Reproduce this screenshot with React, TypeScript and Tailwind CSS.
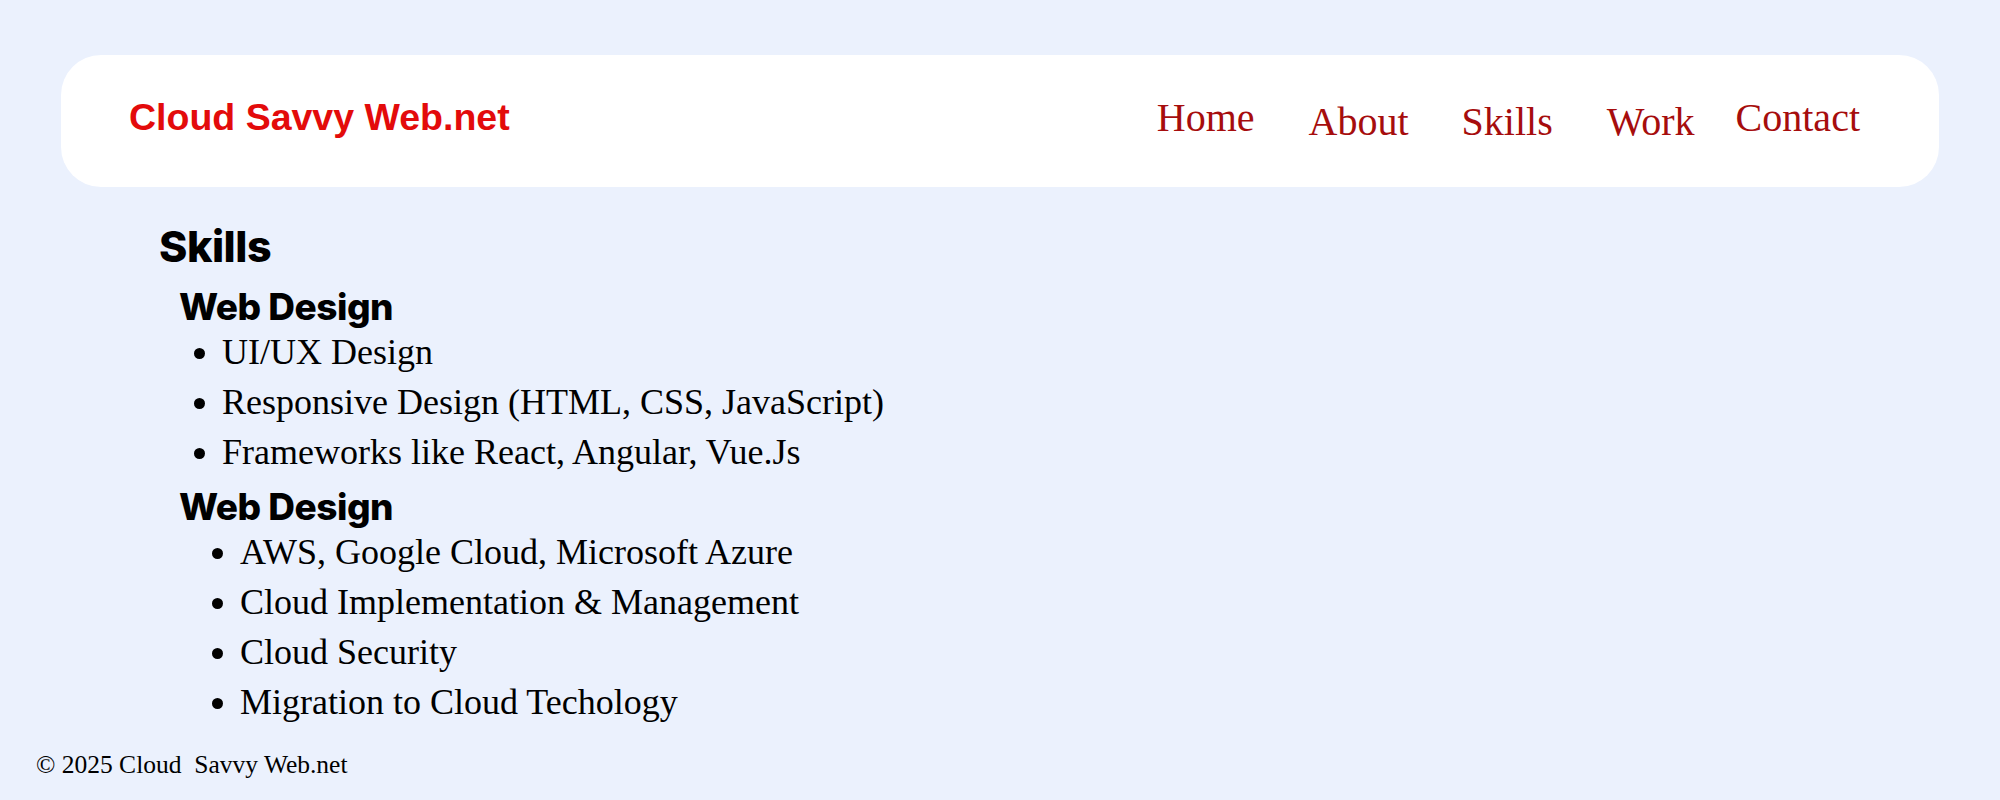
const navLinks = [
  { label: "Home", cls: "ml-0 pb-[4px]" },
  { label: "About", cls: "ml-[54px]" },
  { label: "Skills", cls: "ml-[53px]" },
  { label: "Work", cls: "ml-[54px]" },
  { label: "Contact", cls: "ml-[41px] pb-[4px]" },
];

const skillGroups = [
  {
    title: "Web Design",
    listCls: "pl-[63px]",
    items: ["UI/UX Design", "Responsive Design (HTML, CSS, JavaScript)", "Frameworks like React, Angular, Vue.Js"],
  },
  {
    title: "Web Design",
    listCls: "pl-[81px]",
    items: ["AWS, Google Cloud, Microsoft Azure", "Cloud Implementation & Management", "Cloud Security", "Migration to Cloud Techology"],
  },
];

export default function App() {
  return (
    <div className="min-h-screen bg-[#ebf1fd] pt-[55px] text-black">
      <header className="mx-[61px] h-[132px] rounded-[40px] bg-white flex items-center justify-between pl-[68px] pr-[79px]">
        <div className="text-[37.5px] font-bold leading-none text-[#e30b0b] mb-[6px] font-['Liberation_Sans',Arial,sans-serif]">
          Cloud Savvy Web.net
        </div>
        <nav className="flex items-end mb-[2px] text-[40px] leading-none text-[#a60d0d] font-['Liberation_Serif','Times_New_Roman',serif]">
          {navLinks.map((link) => (
            <a key={link.label} href="#" className={link.cls}>
              {link.label}
            </a>
          ))}
        </nav>
      </header>

      <main className="pl-[159px] mt-[35px]">
        <h1 className="text-[43px] leading-[48px] font-extrabold tracking-[-0.5px] font-['Inter',sans-serif]">Skills</h1>
        {skillGroups.map((group, i) => (
          <section key={i} className={i === 0 ? "mt-[17px]" : "mt-[10px]"}>
            <h2 className="ml-[20px] text-[37px] leading-[40px] font-extrabold tracking-[-0.5px] font-['Inter',sans-serif]">
              {group.title}
            </h2>
            <ul className={`list-disc -ml-[159px] ${group.listCls} text-[36px] leading-[50px] font-['Liberation_Serif','Times_New_Roman',serif]`}>
              {group.items.map((item) => (
                <li key={item} className="ml-[159px]">{item}</li>
              ))}
            </ul>
          </section>
        ))}
      </main>

      <footer className="pl-[36px] pt-[19px] pb-[20px] text-[25.5px] whitespace-pre font-['Liberation_Serif','Times_New_Roman',serif]">
        © 2025 Cloud  Savvy Web.net
      </footer>
    </div>
  );
}
